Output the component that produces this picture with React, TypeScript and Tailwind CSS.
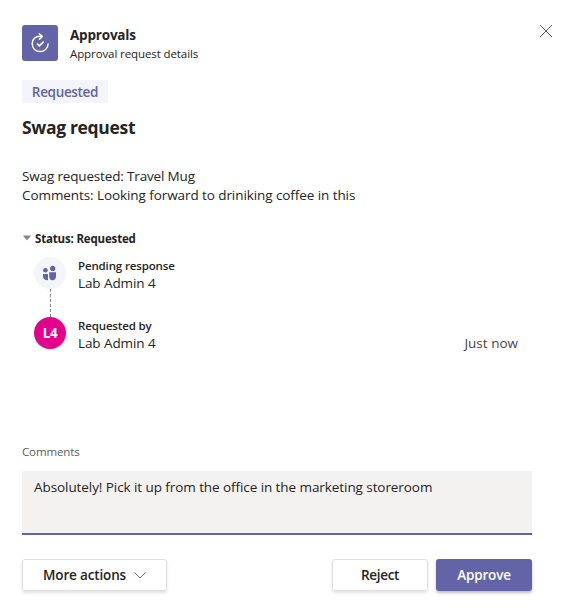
import React from "react";

function ApprovalsLogo() {
  return (
    <svg className="size-9" viewBox="0 0 36 36" fill="none" stroke="#fff">
      <path d="M19.7 11.4C13.2 10.6 10.2 14.4 10.2 18.8c0 4.6 3.5 7.8 8 7.8 4.2 0 7.6-3 7.9-7.6" strokeWidth="1.5" strokeLinecap="round" />
      <path d="M17.300 8.7l3 2.7-2.8 2.8" strokeWidth="1.500" strokeLinecap="round" strokeLinejoin="round" />
      <path d="M15 18.7l2.300 2.200 4.400-4.300" strokeWidth="1.600" />
    </svg>
  );
}

function PeopleIcon() {
  return (
    <svg className="size-8" viewBox="0 0 32 32" fill="#6264a7">
      <circle cx="11.4" cy="13.3" r="2.3" />
      <circle cx="18.7" cy="11.4" r="2.6" />
      <path d="M9 17h5v6.2c-3 0-5-1.3-5-3.7z" />
      <path d="M15.2 15.2H22v4.3c0 2.3-1.4 3.7-3.4 3.7s-3.4-1.4-3.4-3.7z" />
    </svg>
  );
}

type StepProps = { title: string; name: string; time?: string; children: React.ReactNode };

function Step({ title, name, time, children }: StepProps) {
  return (
    <div className="flex h-8 gap-3">
      {children}
      <div className="flex-1">
        <div className="h-[17px] text-[11.5px] leading-[17px] font-semibold tracking-[-0.14px]">{title}</div>
        <div className="flex justify-between text-[13.5px] leading-[18px]">
          <span className="tracking-[-0.09px]">{name}</span>
          {time && <span className="text-[#484644]">{time}</span>}
        </div>
      </div>
    </div>
  );
}

export default function App() {
  return (
    <div className="relative h-[611px] w-[566px] overflow-hidden bg-white pt-[25px] pr-[34px] pl-[22px] font-['Open_Sans','Noto_Sans',sans-serif] whitespace-nowrap text-[#252423]">
      <button className="absolute top-[25px] right-[14px]" aria-label="Close">
        <svg className="size-3" viewBox="0 0 12 12" stroke="#605e5c" strokeWidth="1">
          <path d="M0 0l12 12M12 0L0 12" />
        </svg>
      </button>
      <header className="flex h-9 gap-3">
        <div className="size-9 rounded-[3px] bg-[#6264a7]">
          <ApprovalsLogo />
        </div>
        <div>
          <div className="h-5 text-[13.5px] leading-5 font-bold tracking-[-0.2px]">Approvals</div>
          <div className="text-[11.5px] leading-[18px] tracking-[-0.1px]">Approval request details</div>
        </div>
      </header>
      <div className="mt-[19px] flex h-[23px] w-[86px] items-center justify-center bg-[#f4f4fc] pt-px text-[13.5px] font-semibold tracking-[-0.33px] text-[#6264a7]">
        <span>Requested</span>
      </div>
      <h1 className="mt-3 h-[25px] text-[17.5px] leading-6 font-bold tracking-[-0.33px]">Swag request</h1>
      <div className="mt-[27px] h-[38px] text-[13.5px] leading-[19px]">
        <div className="tracking-[-0.16px]">Swag requested: Travel Mug</div>
        <div className="tracking-[-0.08px]">Comments: Looking forward to driniking coffee in this</div>
      </div>
      <div className="mt-6 flex h-5 items-center">
        <svg className="-mt-[3px] mr-[3px] h-[6px] w-[10px]" viewBox="0 0 10 6" fill="#8a8886">
          <path d="M1 .5h8L5 5.5z" />
        </svg>
        <span className="text-[11.5px] font-bold tracking-[-0.17px]">Status: Requested</span>
      </div>
      <div className="mt-2 pr-[14px] pl-3">
        <Step title="Pending response" name="Lab Admin 4">
          <div className="size-8 rounded-full bg-[#f4f4fc]">
            <PeopleIcon />
          </div>
        </Step>
        <div className="ml-4 h-7 border-l border-dashed border-[#8a8886]" />
        <Step title="Requested by" name="Lab Admin 4" time="Just now">
          <div className="flex size-8 items-center justify-center rounded-full bg-[#e3008c] text-[13.5px] font-bold tracking-[-0.3px] text-white">L4</div>
        </Step>
      </div>
      <div className="mt-[94px] h-[18px] text-[11.5px] leading-[18px] tracking-[-0.12px] text-[#605e5c]">Comments</div>
      <div className="mt-[10px] h-16 border-b-2 border-[#6264a7] bg-[#f3f2f1] px-3 pt-[7px] text-[13.5px] leading-[19px] tracking-[-0.075px]">
        Absolutely! Pick it up from the office in the marketing storeroom
      </div>
      <footer className="mt-6 flex h-8 gap-2 text-[13.5px] font-semibold">
        <button className="mr-auto flex w-[145px] items-center rounded-[3px] border border-[#e1dfdd] pl-5 tracking-[-0.15px] shadow-[0_2px_3px_rgba(0,0,0,0.12)]">
          <span>More actions</span>
          <svg className="mr-5 ml-auto h-[7px] w-3" viewBox="0 0 12 7" fill="none" stroke="#a5643c">
            <path d="M.5.5L6 6 11.5.5" />
          </svg>
        </button>
        <button className="w-24 rounded-[3px] border border-[#e1dfdd] tracking-[-0.3px] shadow-[0_2px_3px_rgba(0,0,0,0.12)]">Reject</button>
        <button className="w-24 rounded-[3px] bg-[#6264a7] tracking-[-0.15px] text-white shadow-[0_2px_3px_rgba(0,0,0,0.25)]">Approve</button>
      </footer>
    </div>
  );
}
